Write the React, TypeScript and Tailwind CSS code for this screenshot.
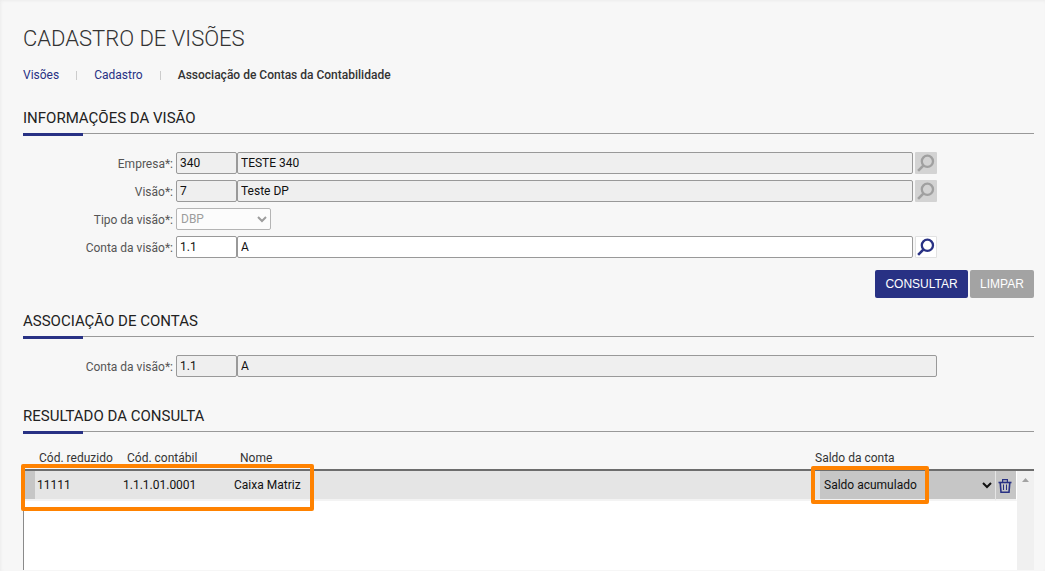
import type { ReactNode } from 'react';

function SectionTitle({ children }: { children: ReactNode }) {
  return (
    <div>
      <h2 className="pb-[5px] text-[15px] leading-5 text-[#222]">{children}</h2>
      <div className="h-[3px] border-t border-[#999]">
        <div className="-mt-px h-[3px] w-[60px] bg-[#283184]" />
      </div>
    </div>
  );
}

function SearchIcon() {
  return (
    <svg viewBox="0 0 22 22" className="h-[22px] w-[22px]" fill="none" stroke="currentColor" aria-hidden="true">
      <circle cx="12.4" cy="9.3" r="5.6" strokeWidth="2.3" />
      <path d="M8.3 13.6 3.1 18.8" strokeWidth="2.6" />
    </svg>
  );
}

type LookupProps = {
  id: string;
  label: string;
  code: string;
  name: string;
  readOnly?: boolean;
  search?: boolean;
};

function FieldLabel({ id, children }: { id: string; children: ReactNode }) {
  return (
    <label htmlFor={id} className="w-[150px] shrink-0 pt-px text-right text-[#555]">
      {children}
    </label>
  );
}

function LookupField({ id, label, code, name, readOnly = false, search = true }: LookupProps) {
  const tone = readOnly ? 'bg-[#efefef]' : 'bg-white';
  return (
    <div className="flex h-[22px] items-center">
      <FieldLabel id={id}>{label}</FieldLabel>
      <div className="ml-[3px] mr-[97px] flex min-w-0 flex-1 items-center">
        <input
          id={id}
          defaultValue={code}
          readOnly={readOnly}
          className={`h-[22px] w-[61px] shrink-0 rounded-[2px] border border-[#999] px-[3px] text-[#111] outline-none ${tone}`}
        />
        <input
          aria-label={`${label} nome`}
          defaultValue={name}
          readOnly={readOnly}
          className={`h-[22px] min-w-0 flex-1 rounded-[2px] border border-[#999] px-[3px] text-[#111] outline-none ${tone}`}
        />
        {search && (
          <button
            type="button"
            aria-label="Pesquisar"
            disabled={readOnly}
            className={
              readOnly
                ? 'ml-[2px] h-[22px] w-[22px] shrink-0 rounded-[1px] bg-[#d3d3d3] text-[#a0a0a0]'
                : 'ml-[2px] h-[22px] w-[22px] shrink-0 rounded-[1px] bg-white text-[#283184] shadow-[inset_0_0_0_1px_#e2e2e2]'
            }
          >
            <SearchIcon />
          </button>
        )}
      </div>
    </div>
  );
}

function TrashIcon() {
  return (
    <svg viewBox="0 0 14 16" className="h-4 w-[14px]" fill="none" stroke="currentColor" aria-hidden="true">
      <path d="M.5 4.5h13" strokeWidth="1.6" />
      <path d="M4.6 4V1.7h4.8V4" strokeWidth="1.2" />
      <path d="M2.2 4.5 3 14.2h8l.8-9.7" strokeWidth="1.6" />
      <path d="M5.5 6.5v5.5M8.5 6.5v5.5" strokeWidth="1" />
    </svg>
  );
}

const headCell = 'border-b-2 border-[#6d6d6d] p-0 text-left font-normal';
const bodyCell = 'border-b-2 border-[#f3f3f3] p-0';

export default function App() {
  return (
    <main className="flex min-h-screen flex-col bg-[#f7f7f7] pb-px pl-[23px] pr-[11px] pt-[25px] font-[Roboto,sans-serif] text-[12px] leading-4 text-[#333] shadow-[inset_1px_1px_3px_#ececec]">
      <h1 className="text-[22px] font-light leading-7 text-[#333]">CADASTRO DE VISÕES</h1>

      <nav aria-label="Navegação" className="mt-[14px] flex items-center">
        <a href="#visoes" className="text-[#283184]">Visões</a>
        <span className="mx-[17px] h-[9px] w-px bg-[#ccc]" />
        <a href="#cadastro" className="text-[#283184]">Cadastro</a>
        <span className="mx-[17px] h-[9px] w-px bg-[#ccc]" />
        <span className="font-medium">Associação de Contas da Contabilidade</span>
      </nav>

      <section className="mt-[25px]">
        <SectionTitle>INFORMAÇÕES DA VISÃO</SectionTitle>
        <div className="mt-4 flex flex-col gap-[6px]">
          <LookupField id="empresa" label="Empresa*:" code="340" name="TESTE 340" readOnly />
          <LookupField id="visao" label="Visão*:" code="7" name="Teste DP" readOnly />
          <div className="flex h-[22px] items-center">
            <FieldLabel id="tipo">Tipo da visão*:</FieldLabel>
            <select
              id="tipo"
              disabled
              className="ml-[3px] h-[22px] w-[95px] rounded-[2px] border border-[#999] bg-white text-[#777] opacity-70"
            >
              <option>DBP</option>
            </select>
          </div>
          <LookupField id="conta" label="Conta da visão*:" code="1.1" name="A" />
        </div>
        <div className="mt-3 flex justify-end gap-[2px] font-['Liberation_Sans',Arial,sans-serif] text-[12px] text-white">
          <button type="button" className="h-7 w-[93px] rounded-[2px] bg-[#283184]">
            CONSULTAR
          </button>
          <button type="button" className="h-7 w-16 rounded-[2px] bg-[#a3a3a3]">
            LIMPAR
          </button>
        </div>
      </section>

      <section className="mt-[13px]">
        <SectionTitle>ASSOCIAÇÃO DE CONTAS</SectionTitle>
        <div className="mt-4">
          <LookupField id="conta-assoc" label="Conta da visão*:" code="1.1" name="A" readOnly search={false} />
        </div>
      </section>

      <section className="mt-[29px] flex flex-1 flex-col">
        <SectionTitle>RESULTADO DA CONSULTA</SectionTitle>
        <div className="relative mt-4 flex flex-1 flex-col">
          <table className="w-full table-fixed border-separate border-spacing-0">
            <colgroup>
              <col className="w-3" />
              <col className="w-[86px]" />
              <col className="w-[111px]" />
              <col />
              <col className="w-[175px]" />
              <col className="w-[22px]" />
              <col className="w-[17px]" />
            </colgroup>
            <thead>
              <tr className="h-[21px] align-top">
                <th className={headCell} />
                <th className={`${headCell} whitespace-nowrap pl-1`}>Cód. reduzido</th>
                <th className={`${headCell} pl-[6px]`}>Cód. contábil</th>
                <th className={`${headCell} pl-2`}>Nome</th>
                <th className={`${headCell} whitespace-nowrap`}>
                  <span className="-ml-[5px]">Saldo da conta</span>
                </th>
                <th className={headCell} />
                <th className={headCell} />
              </tr>
            </thead>
            <tbody>
              <tr className="h-[30px] bg-[#e5e5e5] text-[#111]">
                <td className={`${bodyCell} border-l border-l-[#8a8a8a] bg-[#c6c6c6]`} />
                <td className={`${bodyCell} pl-[2px]`}>11111</td>
                <td className={`${bodyCell} pl-[2px]`}>1.1.1.01.0001</td>
                <td className={`${bodyCell} pl-[2px]`}>Caixa Matriz</td>
                <td className={`${bodyCell} bg-[#c6c6c6]`}>
                  <select aria-label="Saldo da conta" className="block h-7 w-full bg-[#c6c6c6] text-[#111] outline-none">
                    <option>Saldo acumulado</option>
                  </select>
                </td>
                <td className={`${bodyCell} border-x border-r-white border-l-[#e5e5e5] bg-[#c6c6c6]`}>
                  <button type="button" aria-label="Excluir" className="flex h-7 w-full items-center pl-[2px] pt-px text-[#283184]">
                    <TrashIcon />
                  </button>
                </td>
                <td className="bg-[#f0f0f0] p-0 align-top">
                  <svg viewBox="0 0 17 17" className="h-[17px] w-[17px] fill-[#a3a3a3]" aria-hidden="true">
                    <path d="M5 11 8.5 7 12 11z" />
                  </svg>
                </td>
              </tr>
            </tbody>
          </table>
          <div className="flex min-h-[69px] flex-1 border-l border-[#8a8a8a]">
            <div className="flex-1 bg-white" />
            <div className="w-[17px] bg-[#f0f0f0]" />
          </div>
          <div className="pointer-events-none absolute -left-[2px] top-[14px] h-[47px] w-[293px] rounded-[2px] border-4 border-[#ff8200]" />
          <div className="pointer-events-none absolute right-[105px] top-[16px] h-[38px] w-[118px] rounded-[2px] border-4 border-[#ff8200]" />
        </div>
      </section>
    </main>
  );
}
